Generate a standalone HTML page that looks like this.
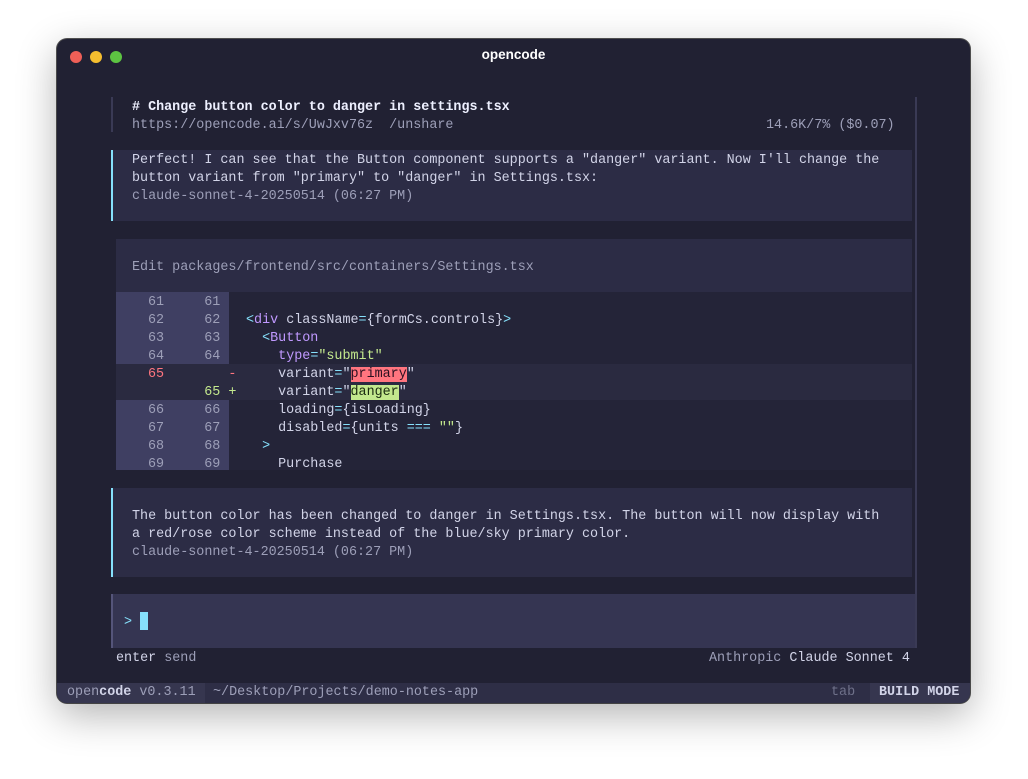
<!DOCTYPE html>
<html><head><style>
*{margin:0;padding:0;box-sizing:border-box}
body{width:1028px;height:779px;background:#fff;position:relative;overflow:hidden;font-family:"Liberation Mono",monospace;font-size:13.4px;color:#d2d4e8}
.win{position:absolute;left:57px;top:39px;width:913px;height:664px;background:#212133;border-radius:10px;box-shadow:0 12px 40px rgba(0,0,0,.3),0 0 0 1px #555;overflow:hidden}
.a{position:absolute;white-space:pre;line-height:18px;margin-top:2px}
.dot{position:absolute;top:12px;width:12px;height:12px;border-radius:50%}
.title{position:absolute;top:8px;left:0;width:913px;text-align:center;font-family:"Liberation Sans",sans-serif;font-weight:bold;font-size:13.5px;color:#fff}
.blk{position:absolute;background:#2c2c45}
.dim{color:#9d9fb8}
.b{font-weight:bold;color:#eef0ff}
.p{color:#c099ff}.g{color:#c3e88d}.c{color:#86e1fc}
</style></head><body>
<div class="win">
<div class="dot" style="left:13px;background:#ee5f57"></div>
<div class="dot" style="left:33px;background:#f5be2f"></div>
<div class="dot" style="left:53px;background:#5dc442"></div>
<div class="title">opencode</div>

<div style="position:absolute;left:54px;top:58px;width:2px;height:35px;background:#3a3a55"></div>
<div style="position:absolute;left:858px;top:58px;width:2px;height:551px;background:#3a3a55"></div>
<div class="a b" style="left:75px;top:58px"># Change button color to danger in settings.tsx</div>
<div class="a dim" style="left:75px;top:76px">https://opencode.ai/s/UwJxv76z  /unshare</div>
<div class="a dim" style="left:709px;top:76px">14.6K/7% ($0.07)</div>

<div class="blk" style="left:54px;top:111px;width:801px;height:71px;border-left:2px solid #86e1fc"></div>
<div class="a" style="left:75px;top:111px">Perfect! I can see that the Button component supports a "danger" variant. Now I'll change the
button variant from "primary" to "danger" in Settings.tsx:
<span class="dim">claude-sonnet-4-20250514 (06:27 PM)</span></div>

<div class="blk" style="left:59px;top:200px;width:796px;height:231px"></div>
<div class="a dim" style="left:75px;top:218px">Edit packages/frontend/src/containers/Settings.tsx</div>
<div style="position:absolute;left:59px;top:253px;width:796px;height:178px;background:#242438"></div>
<div style="position:absolute;left:59px;top:253px;width:113px;height:72px;background:#3f3f62"></div>
<div style="position:absolute;left:59px;top:325px;width:796px;height:36px;background:#2a2a40"></div>
<div style="position:absolute;left:59px;top:361px;width:113px;height:70px;background:#3f3f62"></div>
<div class="a dim" style="left:91px;top:253px">61     61
62     62
63     63
64     64
<span style="color:#ff757f">65</span>        <span style="color:#ff757f">-</span>
       <span style="color:#c3e88d">65</span> <span style="color:#c3e88d">+</span>
66     66
67     67
68     68
69     69</div>
<div class="a" style="left:189px;top:253px">
<span class="c">&lt;</span><span class="p">div</span> className<span class="c">=</span>{formCs.controls}<span class="c">&gt;</span>
  <span class="c">&lt;</span><span class="p">Button</span>
    <span class="p">type</span><span class="c">=</span><span class="g">"submit"</span>
    variant<span class="c">=</span>"<span style="background:#ff757f;color:#2a1020">primary</span>"
    variant<span class="c">=</span>"<span style="background:#c3e88d;color:#1a2a10">danger</span>"
    loading<span class="c">=</span>{isLoading}
    disabled<span class="c">=</span>{units <span class="c">===</span> <span class="g">""</span>}
  <span class="c">&gt;</span>
    Purchase</div>

<div class="blk" style="left:54px;top:449px;width:801px;height:89px;border-left:2px solid #86e1fc"></div>
<div class="a" style="left:75px;top:467px">The button color has been changed to danger in Settings.tsx. The button will now display with
a red/rose color scheme instead of the blue/sky primary color.
<span class="dim">claude-sonnet-4-20250514 (06:27 PM)</span></div>

<div style="position:absolute;left:54px;top:555px;width:804px;height:54px;background:#353552;border-left:2px solid #55557a"></div>
<div class="a c" style="left:67px;top:573px">&gt;</div>
<div style="position:absolute;left:83px;top:573px;width:8px;height:18px;background:#86e1fc"></div>
<div class="a" style="left:59px;top:609px">enter <span class="dim">send</span></div>
<div class="a" style="left:652px;top:609px"><span class="dim">Anthropic</span> Claude Sonnet 4</div>

<div style="position:absolute;left:0;top:644px;width:913px;height:20px;background:#2e2e46"></div>
<div style="position:absolute;left:0;top:644px;width:148px;height:20px;background:#36364f"></div>
<div style="position:absolute;left:813px;top:644px;width:100px;height:20px;background:#36364f"></div>
<div class="a" style="left:10px;top:643px"><span class="dim">open</span><b>code</b> <span class="dim">v0.3.11</span></div>
<div class="a dim" style="left:156px;top:643px">~/Desktop/Projects/demo-notes-app</div>
<div class="a dim" style="left:774px;top:643px;color:#6f718a">tab</div>
<div class="a b" style="left:822px;top:643px;color:#d2d4e8">BUILD MODE</div>
</div>
</body></html>
